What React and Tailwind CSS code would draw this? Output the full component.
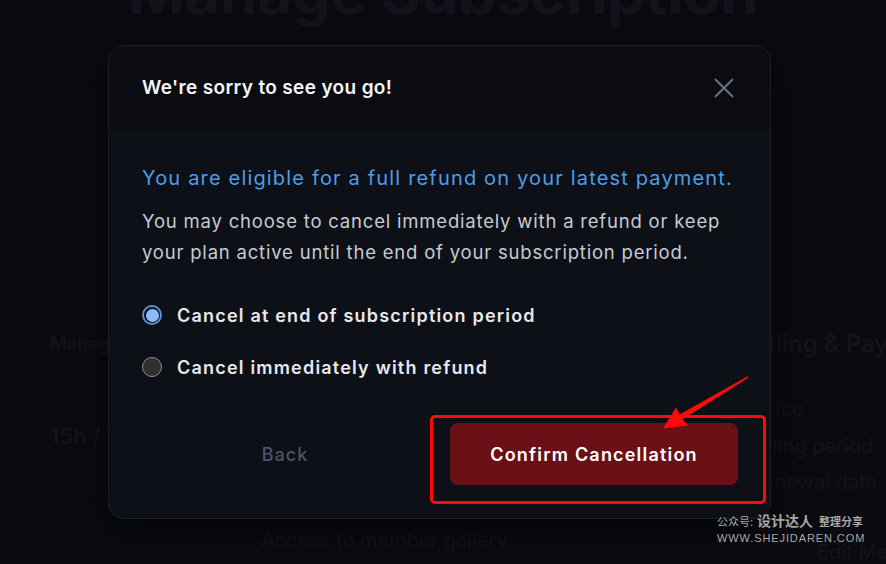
import React from "react";

function Radio({ checked }) {
  if (checked) {
    return (
      <span className="flex h-[20px] w-[20px] shrink-0 items-center justify-center rounded-full border-2 border-[#5b8fd4] bg-[#0e1119]">
        <span className="h-[13px] w-[13px] rounded-full bg-[#8dbdfb]" />
      </span>
    );
  }
  return (
    <span className="h-[20px] w-[20px] shrink-0 rounded-full border-[1.5px] border-[#8f8f8f] bg-[#313131]" />
  );
}

export default function App() {
  return (
    <div
      className="relative h-[564px] w-[886px] overflow-hidden bg-[#0a0b10] text-[#13141b]"
      style={{ fontFamily: "Inter, 'Noto Sans', sans-serif" }}
    >
      {/* background page */}
      <h1 className="mt-[-38px] whitespace-nowrap text-center text-[61px] font-bold leading-none tracking-[-0.3px]">
        Manage Subscription
      </h1>
      <div className="mt-[309px] grid grid-cols-[211px_489px_1fr] pl-[50px] whitespace-nowrap">
        <div className="flex flex-col">
          <div className="text-[18px] font-semibold leading-[24px]">Manage Plan</div>
          <div className="mt-[68px] text-[22px] font-semibold leading-[24px]">15h / 10h</div>
        </div>
        <div className="flex flex-col pt-[196px]">
          <div className="text-[20px] leading-[24px]">Access to member gallery</div>
        </div>
        <div className="flex flex-col">
          <div className="-ml-[3px] -mt-[2px] text-[24px] font-semibold leading-[28px]">Billing &amp; Payment</div>
          <div className="mt-[38px] pl-[5px] text-[20px] leading-[26px]">Price</div>
          <div className="mt-[11px] text-[20px] leading-[26px]">Billing period</div>
          <div className="mt-[10px] text-[20px] leading-[26px]">Renewal date</div>
          <div className="mt-[44px] pl-[67px] text-[20px] leading-[26px]">Edit Method</div>
        </div>
      </div>

      {/* modal */}
      <div className="absolute left-[108px] top-[45px] flex h-[474px] w-[663px] flex-col overflow-hidden rounded-[16px] border border-[#1c1f29] bg-[#0e1018] shadow-[0_10px_40px_rgba(0,0,0,0.6)]">
        <div className="flex h-[84px] shrink-0 items-center justify-between bg-[#0a0c12] pl-[33px] pr-[36px]">
          <div className="text-[19px] font-semibold tracking-[0.35px] text-[#f3f4f6]">
            We're sorry to see you go!
          </div>
          <svg width="20" height="20" viewBox="0 0 20 20">
            <path d="M1.5 1.5 L18.5 18.5 M18.5 1.5 L1.5 18.5" stroke="#6b7483" strokeWidth="2" strokeLinecap="round" />
          </svg>
        </div>
        <div className="flex flex-1 flex-col px-[33px] pt-[33px]">
          <p className="whitespace-nowrap text-[20px] leading-[30px] tracking-[1.17px] text-[#4d9de6]">
            You are eligible for a full refund on your latest payment.
          </p>
          <p className="mt-[13px] w-[592px] text-[18.5px] leading-[31px] tracking-[0.8px] text-[#c6cad2]">
            You may choose to cancel immediately with a refund or keep your plan active until the end of your subscription period.
          </p>
          <div className="mt-[33px] flex flex-col gap-[24px]">
            <label className="flex h-[28px] items-center gap-[15px]">
              <Radio checked />
              <span className="whitespace-nowrap text-[18px] font-semibold tracking-[1.2px] text-[#e6e8ec]">Cancel at end of subscription period</span>
            </label>
            <label className="flex h-[28px] items-center gap-[15px]">
              <Radio />
              <span className="whitespace-nowrap text-[18px] font-semibold tracking-[1.2px] text-[#e6e8ec]">Cancel immediately with refund</span>
            </label>
          </div>
          <div className="mt-[42px] flex items-center justify-between">
            <button className="h-[62px] w-[286px] text-[18px] font-medium tracking-[1px] text-[#4b5567]">Back</button>
            <button className="mr-[-1px] h-[62px] w-[288px] rounded-[8px] bg-[#6a1017] text-[18px] font-semibold tracking-[1.2px] text-white">
              Confirm Cancellation
            </button>
          </div>
        </div>
      </div>

      {/* annotation */}
      <div className="absolute left-[430px] top-[415px] h-[89px] w-[336px] rounded-[5px] border-[3px] border-[#ff0a0a]" />
      <svg className="absolute left-0 top-0" width="886" height="564" viewBox="0 0 886 564">
        <polygon
          points="748.4,377.7 682.5,419.5 688,425.5 663,428.5 676,407.5 679.8,414.6 747.6,376.3"
          fill="#ff0a0a"
        />
      </svg>

      {/* watermark */}
      <div className="absolute left-[717px] top-[513px] flex flex-col whitespace-nowrap text-[#a6a6a6]" style={{ fontFamily: "'Noto Sans CJK SC', sans-serif" }}>
        <div className="flex items-end leading-none">
          <span className="text-[11px]">公众号:</span>
          <span className="ml-[4px] text-[14px] font-bold">设计达人</span>
          <span className="ml-[6px] text-[11px] font-bold">整理分享</span>
        </div>
        <div className="mt-[6px] text-[11px] leading-none tracking-[0.9px]" style={{ fontFamily: "'Liberation Sans', sans-serif" }}>
          WWW.SHEJIDAREN.COM
        </div>
      </div>
    </div>
  );
}
